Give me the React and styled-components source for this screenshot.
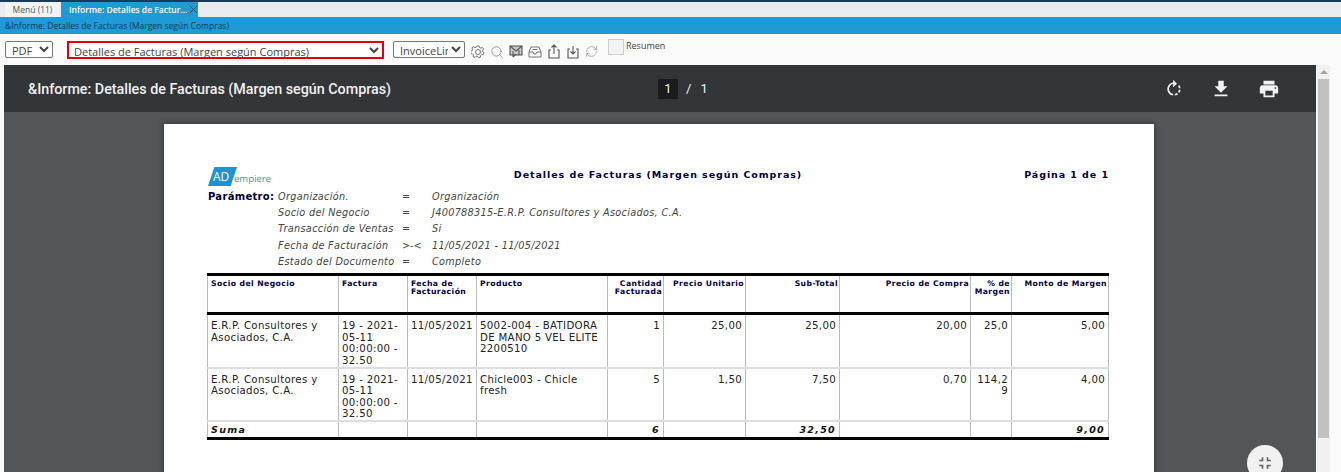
import React from 'react'
import styled, { createGlobalStyle } from 'styled-components'
import { MdRotateRight, MdFileDownload, MdPrint, MdFullscreenExit } from 'react-icons/md'
import { Search, RefreshCw, X } from 'lucide-react'

const columns = [131, 69, 69, 131, 56, 82, 94, 131, 41, 97]

const headers = [
  { label: 'Socio del Negocio' },
  { label: 'Factura' },
  { label: <>Fecha de<br />Facturación</> },
  { label: 'Producto' },
  { label: <>Cantidad<br />Facturada</>, center: true },
  { label: 'Precio Unitario', right: true },
  { label: 'Sub-Total', right: true },
  { label: 'Precio de Compra', right: true },
  { label: <>% de<br />Margen</>, center: true },
  { label: 'Monto de Margen', right: true },
]

const rows = [
  ['E.R.P. Consultores y Asociados, C.A.', '19 - 2021-05-11 00:00:00 - 32.50', '11/05/2021', '5002-004 - BATIDORA DE MANO 5 VEL ELITE 2200510', '1', '25,00', '25,00', '20,00', '25,0', '5,00'],
  ['E.R.P. Consultores y Asociados, C.A.', '19 - 2021-05-11 00:00:00 - 32.50', '11/05/2021', 'Chicle003 - Chicle fresh', '5', '1,50', '7,50', '0,70', '114,29', '4,00'],
]

const params = [
  ['Organización.', '=', 'Organización'],
  ['Socio del Negocio', '=', 'J400788315-E.R.P. Consultores y Asociados, C.A.'],
  ['Transacción de Ventas', '=', 'Si'],
  ['Fecha de Facturación', '>-<', '11/05/2021 - 11/05/2021'],
  ['Estado del Documento', '=', 'Completo'],
]

function App() {
  return (
    <Screen>
      <GlobalStyle />
      <TabBar>
        <Tab>Menú (11)</Tab>
        <Tab active>
          Informe: Detalles de Factur...
          <CloseIcon size={13} strokeWidth={1.2} />
        </Tab>
      </TabBar>
      <TitleBar>&amp;Informe: Detalles de Facturas (Margen según Compras)</TitleBar>
      <Toolbar>
        <Select width={48}><option>PDF</option></Select>
        <ReportSelect><option>Detalles de Facturas (Margen según Compras)</option></ReportSelect>
        <Select width={72}><option>InvoiceLine</option></Select>
        <ToolIcons>
          <svg width="14" height="14" viewBox="0 0 14 14" fill="none" stroke="#777" strokeWidth="1">
            <path d="M5.8 1h2.4l.4 1.6 1.3.6 1.5-.8 1.2 1.7-1.1 1.2.2 1.4 1.3.9-.7 2-1.7-.1-1 1-.1 1.7-2.1.4-.9-1.4H5l-1 1.2-2-.8.3-1.7-.9-1-1.6-.3V6.200l1.500-.6.4-1.300-.8-1.500 1.600-1.300 1.300 1.100 1.500-.4z" />
            <circle cx="7" cy="7" r="2.500" />
          </svg>
          <Search size={14} color="#777" strokeWidth={1.2} />
          <svg width="14" height="13" viewBox="0 0 14 13" fill="none" stroke="#555" strokeWidth="1.1">
            <rect x="1" y="1" width="12" height="9" fill="#ccc" />
            <path d="M1 1l6 5 6-5M4 6v6M4 12l3-3M10 5v5" />
          </svg>
          <svg width="14" height="13" viewBox="0 0 14 13" fill="none" stroke="#777" strokeWidth="1">
            <path d="M1 7l2-5h8l2 5v5H1zM1 7h4l1 2h2l1-2h4M4.500 4.500h5" />
          </svg>
          <svg width="14" height="15" viewBox="0 0 14 15" fill="none" stroke="#555" strokeWidth="1.1">
            <path d="M4 6H2v8h10V6h-2M7 10V1M4.500 3.500L7 1l2.500 2.500" />
          </svg>
          <svg width="14" height="14" viewBox="0 0 14 14" fill="none" stroke="#555" strokeWidth="1.1">
            <path d="M4 4H2v9h10V4h-2M7 1v8M4.500 6.500L7 9l2.500-2.500" />
          </svg>
          <RefreshCw size={13} color="#888" strokeWidth={1.2} />
        </ToolIcons>
        <CheckLabel>
          <CheckBox />
          <span>Resumen</span>
        </CheckLabel>
      </Toolbar>
      <Main>
        <Viewer>
          <ViewerBar>
            <ViewerTitle>&amp;Informe: Detalles de Facturas (Margen según Compras)</ViewerTitle>
            <Pager>
              <PageBox>1</PageBox>
              <span>/</span>
              <span>1</span>
            </Pager>
            <ViewerActions>
              <MdRotateRight size={20} />
              <MdFileDownload size={22} />
              <MdPrint size={22} />
            </ViewerActions>
          </ViewerBar>
          <ViewerBody>
            <Page>
              <ReportHead>
                <Logo>
                  <LogoMark>AD</LogoMark>
                  <LogoWord>empiere</LogoWord>
                </Logo>
                <ReportTitle>Detalles de Facturas (Margen según Compras)</ReportTitle>
                <PageCount>Página 1 de 1</PageCount>
              </ReportHead>
              <ParamBlock>
                <ParamLabel>Parámetro:</ParamLabel>
                <ParamGrid>
                  {params.map((p) => (
                    <React.Fragment key={p[0]}>
                      <ParamText>{p[0]}</ParamText>
                      <ParamOp>{p[1]}</ParamOp>
                      <ParamText>{p[2]}</ParamText>
                    </React.Fragment>
                  ))}
                </ParamGrid>
              </ParamBlock>
              <Table>
                <colgroup>
                  {columns.map((w, i) => <col key={i} style={{ width: w }} />)}
                </colgroup>
                <thead>
                  <tr>
                    {headers.map((h, i) => (
                      <Th key={i} $right={h.right} $center={h.center}>{h.label}</Th>
                    ))}
                  </tr>
                </thead>
                <tbody>
                  {rows.map((r, idx) => (
                    <DataRow key={idx} $tall={idx === 0}>
                      {r.map((c, i) => <Td key={i} $right={i > 3}>{c}</Td>)}
                    </DataRow>
                  ))}
                  <SumRow>
                    <SumCell>Suma</SumCell>
                    <SumCell />
                    <SumCell />
                    <SumCell />
                    <SumCell $right>6</SumCell>
                    <SumCell />
                    <SumCell $right>32,50</SumCell>
                    <SumCell />
                    <SumCell />
                    <SumCell $right>9,00</SumCell>
                  </SumRow>
                </tbody>
              </Table>
            </Page>
            <FitButton><MdFullscreenExit size={20} /></FitButton>
          </ViewerBody>
        </Viewer>
        <Scrollbar>
          <ScrollArrow />
          <ScrollThumb />
        </Scrollbar>
      </Main>
    </Screen>
  )
}

export default App

const GlobalStyle = createGlobalStyle`
html, body {
  margin: 0;
  padding: 0;
  background: #fff;
  overflow: hidden;
}
`

const Screen = styled.div`
width: 1341px;
height: 472px;
overflow: hidden;
display: flex;
flex-direction: column;
font-family: "Open Sans", "Noto Sans", sans-serif;
background: #fafafa;
`

const TabBar = styled.div`
height: 15px;
border-top: 2px solid #1a3a5c;
background: #e9edf0;
display: flex;
padding-left: 5px;
gap: 1px;
`

const Tab = styled.div`
display: flex;
align-items: center;
justify-content: ${(p) => (p.active ? 'space-between' : 'center')};
width: ${(p) => (p.active ? '129px' : '55px')};
padding: ${(p) => (p.active ? '0 0 0 8px' : '0')};
background: ${(p) => (p.active ? '#1e9ad6' : '#f1f3f5')};
color: ${(p) => (p.active ? '#fff' : '#555')};
font-size: 8.5px;
font-weight: ${(p) => (p.active ? 600 : 400)};
white-space: nowrap;
`

const CloseIcon = styled(X)`
color: #123;
flex: none;
`

const TitleBar = styled.div`
height: 17px;
line-height: 17px;
background: #1e9ad6;
color: #123a55;
font-size: 8.5px;
padding-left: 5px;
`

const Toolbar = styled.div`
height: 31px;
display: flex;
align-items: center;
padding-left: 5px;
background: #fafafa;
`

const Select = styled.select`
width: ${(p) => p.width}px;
height: 17px;
font-family: "Open Sans", "Noto Sans", sans-serif;
font-size: 11px;
color: #444;
background: #fff;
border: 1px solid #777;
border-radius: 2px;
padding: 0 0 0 2px;
margin-right: 0;
`

const ReportSelect = styled.select`
width: 317px;
height: 18px;
margin: 0 9px 0 14px;
font-family: "Open Sans", "Noto Sans", sans-serif;
font-size: 11px;
color: #444;
background: #fff;
border: 2px solid #e00000;
padding: 0 0 0 1px;
`

const ToolIcons = styled.div`
display: flex;
align-items: center;
gap: 5px;
margin-left: 6px;
padding-top: 4px;
`

const CheckLabel = styled.label`
display: flex;
align-items: flex-start;
gap: 2px;
margin: -6px 0 0 10px;
font-size: 9px;
color: #444;
`

const CheckBox = styled.span`
display: block;
width: 14px;
height: 14px;
background: #f2f2f2;
border: 1px solid #ccc;
`

const Main = styled.div`
flex: 1;
min-height: 0;
display: flex;
padding-left: 4px;
`

const Viewer = styled.div`
width: 1312px;
display: flex;
flex-direction: column;
overflow: hidden;
`

const ViewerBar = styled.div`
height: 47px;
flex: none;
background: #323639;
color: #f1f1f1;
display: grid;
grid-template-columns: 630px 1fr auto;
align-items: center;
padding-left: 24px;
box-shadow: 0 1px 3px rgba(0, 0, 0, .3);
`

const ViewerTitle = styled.div`
font-family: Roboto, sans-serif;
font-size: 14.3px;
font-weight: 500;
color: #f1f1f1;
white-space: nowrap;
`

const Pager = styled.div`
display: flex;
align-items: center;
gap: 9px;
font-family: Roboto, sans-serif;
font-size: 13px;
`

const PageBox = styled.div`
width: 20px;
height: 20px;
line-height: 20px;
text-align: center;
margin-right: -1px;
background: #191b1c;
`

const ViewerActions = styled.div`
display: flex;
align-items: center;
gap: 26px;
padding-right: 36px;
color: #f1f1f1;
`

const ViewerBody = styled.div`
position: relative;
flex: 1;
min-height: 0;
background: #525659;
padding: 12px 0 0 160px;
overflow: hidden;
`

const Page = styled.div`
width: 990px;
height: 500px;
background: #fff;
box-sizing: border-box;
padding: 43px 0 0 43px;
box-shadow: 0 0 6px rgba(0, 0, 0, .45);
`

const ReportHead = styled.div`
display: grid;
grid-template-columns: 1fr auto 1fr;
width: 902px;
height: 22px;
align-items: flex-start;
font-family: "DejaVu Sans", sans-serif;
`

const Logo = styled.div`
display: flex;
align-items: center;
height: 19px;
margin-left: 1px;
`

const LogoMark = styled.div`
width: 25px;
height: 19px;
line-height: 19px;
padding-left: 5px;
box-sizing: border-box;
background: #1a94d4;
color: #fff;
font-family: "Open Sans", sans-serif;
font-size: 12px;
clip-path: polygon(22% 0, 100% 0, 78% 100%, 0 100%);
width: 29px;
`

const LogoWord = styled.div`
margin-left: -3px;
padding-top: 3px;
color: #2a9bd8;
font-family: "Open Sans", sans-serif;
font-size: 9.5px;
`

const ReportTitle = styled.div`
padding-top: 2px;
font-size: 9.5px;
font-weight: 700;
letter-spacing: .93px;
color: #00003c;
white-space: nowrap;
`

const PageCount = styled.div`
padding-top: 2px;
text-align: right;
font-size: 9.5px;
font-weight: 700;
letter-spacing: .93px;
color: #00003c;
`

const ParamBlock = styled.div`
display: flex;
height: 84px;
font-family: "DejaVu Sans", sans-serif;
line-height: 16.200px;
margin-left: 1px;
`

const ParamLabel = styled.div`
width: 70px;
font-size: 10px;
font-weight: 700;
color: #00003c;
letter-spacing: .3px;
`

const ParamGrid = styled.div`
display: grid;
grid-template-columns: 124px 30px 1fr;
align-content: start;
`

const ParamText = styled.div`
font-size: 9.700px;
font-style: italic;
color: #444;
letter-spacing: .32px;
white-space: nowrap;
`

const ParamOp = styled.div`
font-size: 9.700px;
color: #444;
white-space: nowrap;
`

const Table = styled.table`
width: 901px;
border-collapse: collapse;
table-layout: fixed;
font-family: "DejaVu Sans", sans-serif;
border-top: 3px solid #000;
border-bottom: 3px solid #000;
`

const Th = styled.th`
height: 39px;
padding: 4px 1px 0 3px;
vertical-align: top;
box-sizing: border-box;
font-size: 7.700px;
line-height: 8px;
font-weight: 700;
letter-spacing: .42px;
color: #00003c;
text-align: ${(p) => (p.$right ? 'right' : p.$center ? 'right' : 'left')};
border-left: 1px solid #bbb;
border-right: 1px solid #bbb;
border-bottom: 3px solid #000;
white-space: nowrap;
`

const DataRow = styled.tr`
height: ${(p) => (p.$tall ? '54px' : '53px')};
`

const Td = styled.td`
padding: 5px 3px 0 3px;
vertical-align: top;
font-size: 10.200px;
line-height: 11.500px;
letter-spacing: .32px;
color: #222;
text-align: ${(p) => (p.$right ? 'right' : 'left')};
border-left: 1px solid #bbb;
border-right: 1px solid #bbb;
border-bottom: 2px solid #ddd;
overflow-wrap: anywhere;
tr:last-child > & {
  border-bottom: 0;
}
`

const SumRow = styled.tr`
height: 18px;
`

const SumCell = styled.td`
padding: 0 3px;
font-size: 9.500px;
font-weight: 700;
font-style: italic;
letter-spacing: 1.300px;
color: #111;
text-align: ${(p) => (p.$right ? 'right' : 'left')};
border-left: 1px solid #bbb;
border-right: 1px solid #bbb;
border-top: 2px solid #666;
`

const FitButton = styled.div`
position: absolute;
right: 33px;
bottom: -9px;
width: 36px;
height: 36px;
border-radius: 50%;
background: #f1f1f1;
color: #666;
display: flex;
align-items: center;
justify-content: center;
`

const Scrollbar = styled.div`
width: 13px;
margin-left: 1px;
background: #f1f1f1;
display: flex;
flex-direction: column;
align-items: center;
`

const ScrollArrow = styled.div`
margin: 5px 0 5px;
width: 0;
height: 0;
border-left: 4px solid transparent;
border-right: 4px solid transparent;
border-bottom: 4px solid #a3a3a3;
`

const ScrollThumb = styled.div`
width: 11px;
height: 359px;
background: #c1c1c1;
`
